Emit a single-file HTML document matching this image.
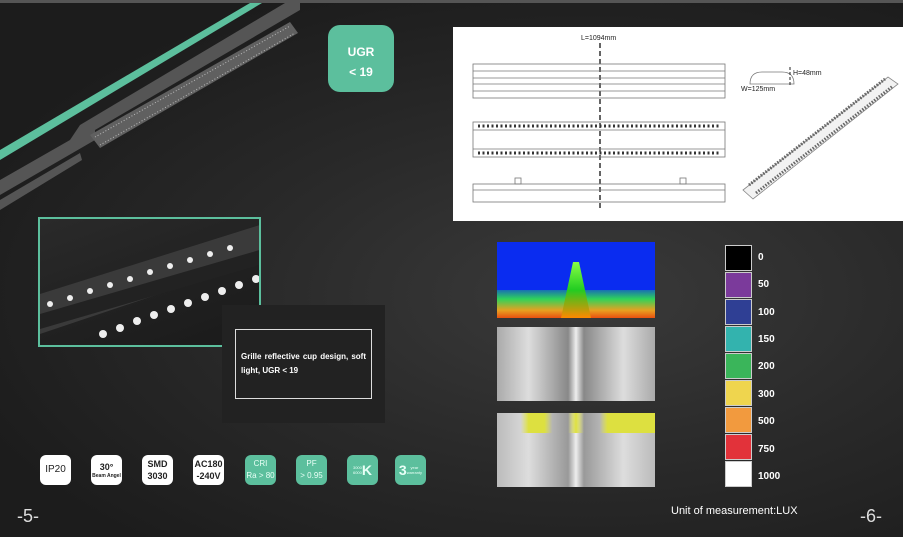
<!DOCTYPE html><html><head><style>
*{margin:0;padding:0;box-sizing:border-box}
body{width:903px;height:537px;overflow:hidden;position:relative;font-family:"Liberation Sans",sans-serif;background:radial-gradient(ellipse at 65% 55%,#3a3a3a 0%,#2a2a2a 40%,#1c1c1c 80%);}
.abs{position:absolute}
.b{position:absolute;top:455px;width:31px;height:30px;border-radius:6px;background:#fff;color:#222;font-weight:bold;font-size:9px;text-align:center;display:flex;flex-direction:column;justify-content:center;line-height:12px}
.t{background:#5cbf9d;color:#e8fff6;font-weight:normal}
.lg{position:absolute;left:725px;width:27px;height:26px;border:1px solid #ccc}
.ll{position:absolute;left:758px;color:#fff;font-size:10px;font-weight:bold}
</style></head><body>
<div class="abs" style="left:0;top:0;width:903px;height:3px;background:#555"></div>
<svg class="abs" style="left:0;top:0" width="400" height="220">
<polygon points="0,150 250,3 262,3 0,160" fill="#5cbf9d"/>
<polygon points="0,195 95,140 95,130 300,10 300,3 285,3 80,125 70,140 0,180" fill="#555"/>
<polygon points="90,135 290,22 298,33 100,148" fill="#606060"/>
<line x1="95" y1="137" x2="290" y2="26" stroke="#bbb" stroke-width="1" stroke-dasharray="1,2"/>
<line x1="100" y1="145" x2="295" y2="33" stroke="#bbb" stroke-width="1" stroke-dasharray="1,2"/>
<polygon points="0,200 80,153 82,160 0,210" fill="#555"/>
</svg>
<div class="abs" style="left:328px;top:25px;width:66px;height:67px;border-radius:12px;background:#5cbf9d;color:#fff;font-weight:bold;font-size:12px;text-align:center;padding-top:17px;line-height:20px">UGR<br>&lt; 19</div>
<div class="abs" style="left:38px;top:217px;width:223px;height:130px;border:2px solid #5cbf9d;background:linear-gradient(160deg,#2a2a2a,#1a1a1a);overflow:hidden">
<svg width="223" height="130"><polygon points="0,75 223,5 223,40 0,115" fill="#3a3a3a"/><polygon points="0,95 223,30 223,45 0,110" fill="#222"/>
<g fill="#eee"><circle cx="10" cy="85" r="3"/><circle cx="30" cy="79" r="3"/><circle cx="50" cy="72" r="3"/><circle cx="70" cy="66" r="3"/><circle cx="90" cy="60" r="3"/><circle cx="110" cy="53" r="3"/><circle cx="130" cy="47" r="3"/><circle cx="150" cy="41" r="3"/><circle cx="170" cy="35" r="3"/><circle cx="190" cy="29" r="3"/>
<circle cx="63" cy="115" r="4"/><circle cx="80" cy="109" r="4"/><circle cx="97" cy="102" r="4"/><circle cx="114" cy="96" r="4"/><circle cx="131" cy="90" r="4"/><circle cx="148" cy="84" r="4"/><circle cx="165" cy="78" r="4"/><circle cx="182" cy="72" r="4"/><circle cx="199" cy="66" r="4"/><circle cx="216" cy="60" r="4"/></g></svg></div>
<div class="abs" style="left:222px;top:305px;width:163px;height:118px;background:#222"></div>
<div class="abs" style="left:235px;top:329px;width:137px;height:70px;border:1px solid #ddd;color:#fff;font-size:8px;font-weight:bold;padding:20px 5px 0 5px;line-height:14px;text-align:justify">Grille reflective cup design, soft light, UGR &lt; 19</div>
<div class="b" style="left:40px;font-weight:normal;font-size:10px">IP20</div>
<div class="b" style="left:91px">30°<span style="font-size:5px;line-height:6px">Beam Angel</span></div>
<div class="b" style="left:142px">SMD<br>3030</div>
<div class="b" style="left:193px">AC180<br>-240V</div>
<div class="b t" style="left:245px;font-size:8px">CRI<br>Ra &gt; 80</div>
<div class="b t" style="left:296px;font-size:8px">PF<br>&gt; 0.95</div>
<div class="b t" style="left:347px;flex-direction:row;align-items:center;font-size:4px"><span style="line-height:5px">3000<br>6000</span><b style="font-size:14px">K</b></div>
<div class="b t" style="left:395px;flex-direction:row;align-items:center;font-size:4px"><b style="font-size:14px">3</b><span style="line-height:5px">year<br>warranty</span></div>
<div class="abs" style="left:17px;top:506px;color:#ddd;font-size:18px">-5-</div>
<div class="abs" style="left:860px;top:506px;color:#ddd;font-size:18px">-6-</div>
<div class="abs" style="left:453px;top:27px;width:450px;height:194px;background:#fff">
<svg width="450" height="194" font-family="Liberation Sans" font-size="7">
<text x="128" y="13" fill="#222">L=1094mm</text>
<line x1="147" y1="16" x2="147" y2="183" stroke="#111" stroke-width="1.3" stroke-dasharray="5,3"/>
<g fill="none" stroke="#777" stroke-width="0.8">
<rect x="20" y="37" width="252" height="34"/><line x1="20" y1="44" x2="272" y2="44"/><line x1="20" y1="51" x2="272" y2="51"/><line x1="20" y1="57" x2="272" y2="57"/><line x1="20" y1="64" x2="272" y2="64"/>
<rect x="20" y="95" width="252" height="35"/><line x1="20" y1="103" x2="272" y2="103"/><line x1="20" y1="122" x2="272" y2="122"/>
<rect x="20" y="157" width="252" height="18"/><line x1="20" y1="163" x2="272" y2="163"/>
<rect x="62" y="151" width="6" height="6"/><rect x="227" y="151" width="6" height="6"/>
<path d="M147,57 q0,-12 12,-12 h20 q12,0 12,12 z" transform="translate(150,0)"/>
</g>
<line x1="25" y1="99" x2="268" y2="99" stroke="#333" stroke-width="3" stroke-dasharray="2,2.5"/>
<line x1="25" y1="126" x2="268" y2="126" stroke="#333" stroke-width="3" stroke-dasharray="2,2.5"/>
<text x="340" y="48" fill="#222">H=48mm</text><text x="288" y="64" fill="#222">W=125mm</text>
<line x1="337" y1="40" x2="337" y2="60" stroke="#222" stroke-dasharray="3,2"/>
<polygon points="290,163 435,50 445,57 300,172" fill="#f2f2f2" stroke="#888" stroke-width="0.8"/>
<line x1="296" y1="158" x2="432" y2="52" stroke="#666" stroke-width="3" stroke-dasharray="1.5,1.5"/>
<line x1="303" y1="166" x2="440" y2="59" stroke="#666" stroke-width="3" stroke-dasharray="1.5,1.5"/>
</svg></div>
<div class="abs" style="left:497px;top:242px;width:158px;height:76px;background:linear-gradient(180deg,#0a2cf0 0%,#0a2cf0 55%,#2fd35a 75%,#e9a020 90%,#e95010 100%)"><div style="position:absolute;left:0;right:0;top:0;height:48px;background:#0a2cf0"></div><div style="position:absolute;left:64px;width:30px;top:20px;height:56px;background:linear-gradient(#8f4,#2c2,#f80);clip-path:polygon(40% 0,60% 0,100% 100%,0 100%)"></div></div>
<div class="abs" style="left:497px;top:327px;width:158px;height:74px;background:linear-gradient(90deg,#aaa,#ddd 20%,#888 45%,#eee 50%,#888 55%,#ddd 80%,#aaa)"></div>
<div class="abs" style="left:497px;top:413px;width:158px;height:74px;background:linear-gradient(90deg,#bbb,#ddd 20%,#999 45%,#eee 50%,#999 55%,#ddd 80%,#bbb)"><div style="position:absolute;left:0;right:0;top:0;height:20px;background:linear-gradient(90deg,transparent 15%,#dde040 20%,#dde040 30%,transparent 35%,transparent 45%,#dde040 50%,transparent 55%,transparent 65%,#dde040 70%,#dde040 95%)"></div></div>
<div class="lg" style="top:245px;background:#000"></div><div class="ll" style="top:252px">0</div>
<div class="lg" style="top:272px;background:#7b3a9b"></div><div class="ll" style="top:279px">50</div>
<div class="lg" style="top:299px;background:#2f3f94"></div><div class="ll" style="top:307px">100</div>
<div class="lg" style="top:326px;background:#33b3ae"></div><div class="ll" style="top:334px">150</div>
<div class="lg" style="top:353px;background:#3ab55a"></div><div class="ll" style="top:361px">200</div>
<div class="lg" style="top:380px;background:#efd54e"></div><div class="ll" style="top:389px">300</div>
<div class="lg" style="top:407px;background:#f29a3e"></div><div class="ll" style="top:416px">500</div>
<div class="lg" style="top:434px;background:#e2323a"></div><div class="ll" style="top:444px">750</div>
<div class="lg" style="top:461px;background:#fff"></div><div class="ll" style="top:471px">1000</div>
<div class="abs" style="left:671px;top:505px;color:#fff;font-size:11px">Unit of measurement:LUX</div>
</body></html>
